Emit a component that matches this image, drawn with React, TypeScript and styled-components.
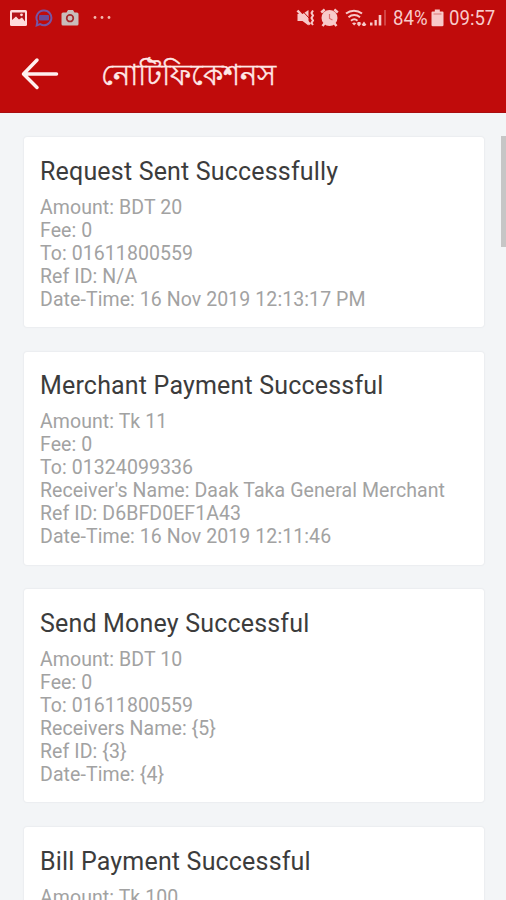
import React from 'react';
import styled, { createGlobalStyle } from 'styled-components';

const Global = createGlobalStyle`
  * { box-sizing: border-box; }
  html, body { margin: 0; height: 900px; overflow: hidden; background: #f3f5f7; }
  body { font-family: Roboto, "Noto Sans", sans-serif; }
`;

const Screen = styled.div`
  width: 506px;
  height: 900px;
  overflow: hidden;
  display: flex;
  flex-direction: column;
  background: #f3f5f7;
`;

const Header = styled.header`
  flex: none;
  height: 113px;
  background: #c00b0b;
  border-bottom: 1px solid #a90d10;
`;

const StatusBar = styled.div`
  height: 36px;
  padding: 0 10px 0 9px;
  display: flex;
  justify-content: space-between;
  align-items: center;
  color: #f8caca;
`;

const StatusIcons = styled.div`
  display: flex;
  align-items: center;
  height: 36px;
`;

const StatusIcon = styled.svg<{ $gap: number }>`
  display: block;
  flex: none;
  margin-right: ${(p) => p.$gap}px;
`;

const StatusText = styled.span<{ $width: number; $gap?: number }>`
  font-size: 20px;
  line-height: 36px;
  width: ${(p) => p.$width}px;
  margin-right: ${(p) => p.$gap ?? 0}px;
  transform: scaleX(0.93);
  transform-origin: left center;
  white-space: nowrap;
`;

const TitleBar = styled.div`
  height: 76px;
  padding-left: 21px;
  display: flex;
  align-items: center;
`;

const BackButton = styled.button`
  width: 38px;
  height: 36px;
  padding: 0;
  border: 0;
  background: none;
`;

const PageTitle = styled.h1`
  margin: 2px 0 0 42px;
  font-size: 29px;
  font-weight: 400;
  line-height: 40px;
  color: #ffe9e7;
  -webkit-text-stroke: 0.4px #ffe9e7;
  white-space: nowrap;
`;

const Content = styled.main`
  flex: 1;
  min-height: 0;
  display: flex;
  justify-content: space-between;
  padding-left: 24px;
`;

const List = styled.div`
  width: 459.5px;
  padding-top: 24px;
  display: flex;
  flex-direction: column;
  gap: 24.8px;
`;

const Card = styled.article`
  flex: none;
  background: #fff;
  border-radius: 3px;
  box-shadow: 0 0 2px rgba(70, 80, 85, 0.14);
  padding: 17.5px 16px 16.4px;
`;

const CardTitle = styled.h2`
  margin: 0 0 7px;
  font-size: 25px;
  line-height: 34px;
  font-weight: 400;
  letter-spacing: 0.18px;
  color: #3c3c3c;
  white-space: nowrap;
`;

const Detail = styled.p`
  margin: 0;
  font-size: 19.5px;
  line-height: 23px;
  letter-spacing: 0.08px;
  color: #a2a2a2;
  white-space: nowrap;
`;

const ScrollThumb = styled.div`
  width: 5px;
  height: 111px;
  margin-top: 23px;
  background: #c6c6c6;
`;

const notifications = [
  {
    title: 'Request Sent Successfully',
    lines: ['Amount: BDT 20', 'Fee: 0', 'To: 01611800559', 'Ref ID: N/A', 'Date-Time: 16 Nov 2019 12:13:17 PM'],
  },
  {
    title: 'Merchant Payment Successful',
    lines: [
      'Amount: Tk 11',
      'Fee: 0',
      'To: 01324099336',
      "Receiver's Name: Daak Taka General Merchant",
      'Ref ID: D6BFD0EF1A43',
      'Date-Time: 16 Nov 2019 12:11:46',
    ],
  },
  {
    title: 'Send Money Successful',
    lines: ['Amount: BDT 10', 'Fee: 0', 'To: 01611800559', 'Receivers Name: {5}', 'Ref ID: {3}', 'Date-Time: {4}'],
  },
  { title: 'Bill Payment Successful', lines: ['Amount: Tk 100'] },
];

const ImageIcon = () => (
  <StatusIcon $gap={8} width="18" height="18" viewBox="0 0 18 18">
    <rect x="1" y="1" width="17" height="16" rx="1.5" fill="#ffdcdc" />
    <path d="M3 3.5h13v9l-3-4-3 2-3-3-4 3.5z" fill="#b3141a" />
    <path d="M3 12l4-3.5 3 3.5 3-2 3 3H3z" fill="#ffdcdc" />
    <circle cx="12.5" cy="5.8" r="1.4" fill="#ffdcdc" />
  </StatusIcon>
);

const ChatIcon = () => (
  <StatusIcon $gap={8} width="18" height="18" viewBox="0 0 18 18">
    <path d="M9 1.6a7.3 7.3 0 1 1-3.8 13.5L1.7 16.4l.7-4A7.3 7.3 0 0 1 9 1.6z" fill="none" stroke="#7656a5" strokeWidth="2" />
    <rect x="4" y="6" width="10" height="5.5" rx="1" fill="#6b4a98" />
  </StatusIcon>
);

const CameraIcon = () => (
  <StatusIcon $gap={13} width="18" height="18" viewBox="0 0 18 18">
    <path d="M2 3.5h3.5L7 1h5l1.5 2.5H16A1.5 1.5 0 0 1 17.5 5v10a1.5 1.5 0 0 1-1.5 1.5H2A1.5 1.5 0 0 1 .5 15V5A1.5 1.5 0 0 1 2 3.5z" fill="#c9bdbb" />
    <circle cx="9" cy="9.2" r="3.3" fill="#c9bdbb" stroke="#a52a2e" strokeWidth="1.7" />
  </StatusIcon>
);

const MoreIcon = () => (
  <StatusIcon $gap={0} width="20" height="18" viewBox="0 0 20 18" fill="#f3b8ac">
    <circle cx="3" cy="8.5" r="1.4" />
    <circle cx="10" cy="8.5" r="1.4" />
    <circle cx="17" cy="8.5" r="1.4" />
  </StatusIcon>
);

const MuteIcon = () => (
  <StatusIcon $gap={4} width="20" height="20" viewBox="0 0 20 20">
    <path d="M1.5 6h5L12.5 2v15.5l-6-4.500h-5z" fill="#f8caca" />
    <path d="M5.500 2l8.500 9" stroke="#c00b0b" strokeWidth="1" />
    <path d="M1.500 2.500l12.500 14" stroke="#f8caca" strokeWidth="2.600" />
    <path d="M17 2.500l-1.500 2.500 1.500 2.500-1.500 2.500 1.500 2.500-1.500 2.500 1.500 2" fill="none" stroke="#f8caca" strokeWidth="2" />
  </StatusIcon>
);

const AlarmIcon = () => (
  <StatusIcon $gap={6} width="19" height="20" viewBox="0 0 19 20">
    <circle cx="9.5" cy="10" r="8" fill="#f8caca" />
    <path d="M1.2 4.500l3.500-3M17.800 4.500l-3.500-3M4.500 15.500L2.500 18M14.500 15.500l2 2.500" stroke="#f8caca" strokeWidth="2.500" />
    <path d="M9.500 6v4.500l3 1.500" fill="none" stroke="#dc7070" strokeWidth="1.200" />
  </StatusIcon>
);

const WifiIcon = () => (
  <StatusIcon $gap={1} width="24" height="20" viewBox="0 0 24 20">
    <g fill="none" stroke="#f8caca" strokeWidth="2">
      <path d="M1 5.500a13 13 0 0 1 16 0" />
      <path d="M3.500 9.200a9 9 0 0 1 11.500 0" />
      <path d="M6 12.700a5 5 0 0 1 6.500 0" />
    </g>
    <path d="M7 15.200l2.200 2.300 2-2.300a3.500 3.500 0 0 0-4.200 0z" fill="#f8caca" />
    <path d="M12.500 14h3v1.500h1l-2.500 3-2.500-3h1zM17.500 17h-1l2.500-3.500 2.500 3.500h-1v1h-3z" fill="#f8caca" />
  </StatusIcon>
);

const SignalIcon = () => (
  <StatusIcon $gap={5} width="18" height="20" viewBox="0 0 18 20" fill="#f8caca">
    <rect x="0" y="14.5" width="2.5" height="3" />
    <rect x="4.5" y="12" width="2.3" height="5.5" />
    <rect x="8.7" y="7" width="2.6" height="10.5" />
    <rect x="14" y="2" width="2" height="15.5" opacity=".3" />
  </StatusIcon>
);

const BatteryIcon = () => (
  <StatusIcon $gap={5} width="13" height="20" viewBox="0 0 13 20">
    <path d="M1.5 3.500h2.300V1.500h5v2h2.700q1 0 1 1V17q0 1.300-1.300 1.300H1.800Q.5 18.300.5 17V4.500q0-1 1-1z" fill="#f8caca" />
    <path d="M2.500 6h8" stroke="#d97777" strokeWidth="1" />
  </StatusIcon>
);

export default function App() {
  return (
    <Screen>
      <Global />
      <Header>
        <StatusBar>
          <StatusIcons>
            <ImageIcon />
            <ChatIcon />
            <CameraIcon />
            <MoreIcon />
          </StatusIcons>
          <StatusIcons>
            <MuteIcon />
            <AlarmIcon />
            <WifiIcon />
            <SignalIcon />
            <StatusText $width={34} $gap={4}>84%</StatusText>
            <BatteryIcon />
            <StatusText $width={47}>09:57</StatusText>
          </StatusIcons>
        </StatusBar>
        <TitleBar>
          <BackButton aria-label="Back">
            <svg width="38" height="36" viewBox="0 0 38 36" fill="none" stroke="#fff0ef" strokeWidth="3.5" strokeLinecap="round" strokeLinejoin="round">
              <path d="M16 4L2.5 18 16 31.5M3 18h32.5" />
            </svg>
          </BackButton>
          <PageTitle lang="bn">নোটিফিকেশনস</PageTitle>
        </TitleBar>
      </Header>
      <Content>
        <List>
          {notifications.map((n) => (
            <Card key={n.title}>
              <CardTitle>{n.title}</CardTitle>
              {n.lines.map((line) => (
                <Detail key={line}>{line}</Detail>
              ))}
            </Card>
          ))}
        </List>
        <ScrollThumb />
      </Content>
    </Screen>
  );
}
